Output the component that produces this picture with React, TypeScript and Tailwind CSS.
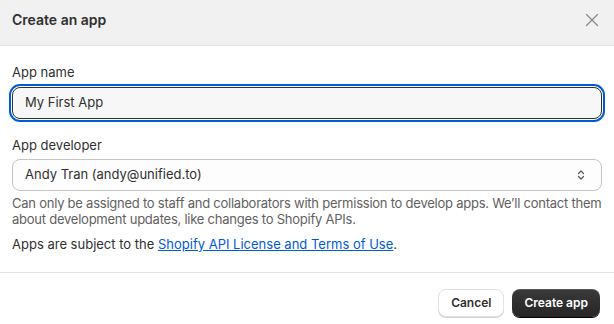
import { X } from "lucide-react";

function UpDownChevron() {
  return (
    <svg width="10" height="14" viewBox="0 0 10 14" fill="none" aria-hidden>
      <path d="M2.5 5.5L5 3l2.5 2.5" stroke="#5c5c5c" strokeWidth="1.3" strokeLinecap="round" strokeLinejoin="round" />
      <path d="M2.5 8.5L5 11l2.5-2.5" stroke="#5c5c5c" strokeWidth="1.3" strokeLinecap="round" strokeLinejoin="round" />
    </svg>
  );
}

export default function App() {
  return (
    <div className="w-[614px] h-[324px] overflow-hidden bg-white font-['Inter',sans-serif] text-[#303030]">
      <div className="flex h-[46px] items-center justify-between border-b border-[#e3e3e3] bg-[#f1f1f1] pl-3 pr-[11px] pb-[6px]">
        <h2 className="text-[14px] font-semibold leading-5">Create an app</h2>
        <X size={22} strokeWidth={1.4} className="text-[#8a8a8a]" />
      </div>

      <div className="px-3 pt-4 pb-5">
        <label className="block text-[13px] leading-5">App name</label>
        <div className="mt-[5px] flex h-[32px] items-center rounded-[8px] border border-[#303030] bg-[#f7f7f7] px-3 text-[13px] outline-2 outline-offset-1 outline-[#005bd3]">
          My First App
        </div>

        <label className="mt-4 block text-[13px] leading-5">App developer</label>
        <div className="mt-1 flex h-[32px] items-center justify-between rounded-[8px] border border-[#c4c4c4] bg-[#fdfdfd] pl-3 pr-[15px] text-[13px]">
          <span>Andy Tran (andy@unified.to)</span>
          <UpDownChevron />
        </div>
        <p className="mt-1 text-[13px] leading-4 tracking-[-0.24px] text-[#616161]">
          Can only be assigned to staff and collaborators with permission to develop apps. We’ll contact them about
          development updates, like changes to Shopify APIs.
        </p>

        <p className="mt-[9px] text-[13px] leading-4">
          Apps are subject to the{" "}
          <a href="#" className="text-[#005bd3] underline">
            Shopify API License and Terms of Use
          </a>
          .
        </p>
      </div>

      <div className="flex justify-end gap-2 border-t border-[#e3e3e3] pt-4 pr-[14px]">
        <button className="h-7 rounded-[8px] border border-[#e3e3e3] bg-white px-3 text-[12px] font-semibold shadow-[0_1px_0_#d4d4d4]">
          Cancel
        </button>
        <button className="h-7 rounded-[8px] bg-gradient-to-b from-[#3a3a3a] to-[#262626] px-3 text-[12px] font-semibold text-white shadow-[0_1px_0_#000,inset_0_1px_0_rgba(255,255,255,0.15)]">
          Create app
        </button>
      </div>
    </div>
  );
}
